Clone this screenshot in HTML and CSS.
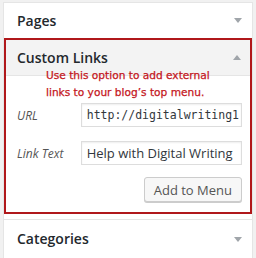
FILE: index.html
```html
<!DOCTYPE html>
<html>
<head>
<meta charset="utf-8">
<link rel="stylesheet" href="styles.css">
</head>
<body>
<div class="panel">
  <div class="section">
    <h3 class="title">Pages</h3>
    <span class="arrow down"></span>
  </div>
  <div class="section open">
    <div class="open-head">
      <h3 class="title">Custom Links</h3>
      <span class="arrow up"></span>
    </div>
    <p class="note">Use this option to add external<br>links to your blog’s top menu.</p>
    <div class="body">
      <div class="row">
        <label class="label">URL</label>
        <div class="input mono">http://digitalwriting1</div>
      </div>
      <div class="row">
        <label class="label">Link Text</label>
        <div class="input">Help with Digital Writing</div>
      </div>
      <div class="actions">
        <button class="btn">Add to Menu</button>
      </div>
    </div>
  </div>
  <div class="section last">
    <h3 class="title">Categories</h3>
    <span class="arrow down"></span>
  </div>
</div>
</body>
</html>
```

FILE: styles.css
```css
html, body {
  margin: 0;
  padding: 0;
}
body {
  background: #f1f1f1;
  width: 256px;
  height: 258px;
  overflow: hidden;
  font-family: "Open Sans", "Liberation Sans", sans-serif;
  padding: 2px 0 0 3px;
  box-sizing: border-box;
}
.panel {
  width: 250px;
  background: #fff;
  border: 1px solid #e5e5e5;
  border-bottom: none;
  height: 260px;
  box-sizing: border-box;
}
.section {
  display: flex;
  align-items: center;
  justify-content: space-between;
  height: 35px;
  padding: 0 10px 0 13px;
}
.title {
  margin: 0;
  font-size: 14px;
  font-weight: 600;
  color: #23282d;
  line-height: 20px;
}
.arrow {
  width: 0;
  height: 0;
  border-left: 4px solid transparent;
  border-right: 4px solid transparent;
}
.arrow.down { border-top: 5px solid #a0a5aa; }
.arrow.up { border-bottom: 5px solid #a0a5aa; }
.section.open {
  display: block;
  height: auto;
  padding: 0;
  border: 2px solid #b0181b;
  position: relative;
  width: 248px;
  box-sizing: border-box;
}
.open-head {
  background: #f3f3f3;
  height: 35px;
  display: flex;
  align-items: center;
  justify-content: space-between;
  padding: 0 9px 0 11px;
  border-bottom: 1px solid #e5e5e5;
}
.note {
  position: absolute;
  left: 40px;
  top: 27px;
  margin: 0;
  font-family: "DejaVu Sans", sans-serif;
  font-size: 10.6px;
  line-height: 17px;
  color: #c4161c;
  -webkit-text-stroke: 0.25px #c4161c;
}
.body {
  padding: 27px 8px 10px 11px;
}
.row {
  display: flex;
  align-items: center;
  margin-bottom: 14px;
}
.label {
  width: 64px;
  font-style: italic;
  font-size: 12px;
  color: #555;
}
.input {
  width: 162px;
  height: 24px;
  box-sizing: border-box;
  border: 1px solid #ddd;
  box-shadow: inset 0 1px 2px rgba(0,0,0,0.07);
  padding: 0 5px;
  font-size: 13px;
  line-height: 22px;
  color: #32373c;
  white-space: nowrap;
  overflow: hidden;
}
.input.mono {
  font-family: "DejaVu Sans Mono", monospace;
  font-size: 11.5px;
}
.actions {
  display: flex;
  justify-content: flex-end;
  margin-top: -2px;
}
.btn {
  height: 25px;
  padding: 0 9px;
  font-family: "Open Sans", sans-serif;
  font-size: 13px;
  color: #555;
  background: #f7f7f7;
  border: 1px solid #ccc;
  border-radius: 3px;
  box-shadow: 0 1px 0 #ccc;
}
.section.last {
  margin-top: 5px;
  border-top: 1px solid #e5e5e5;
  height: 38px;
}
```
